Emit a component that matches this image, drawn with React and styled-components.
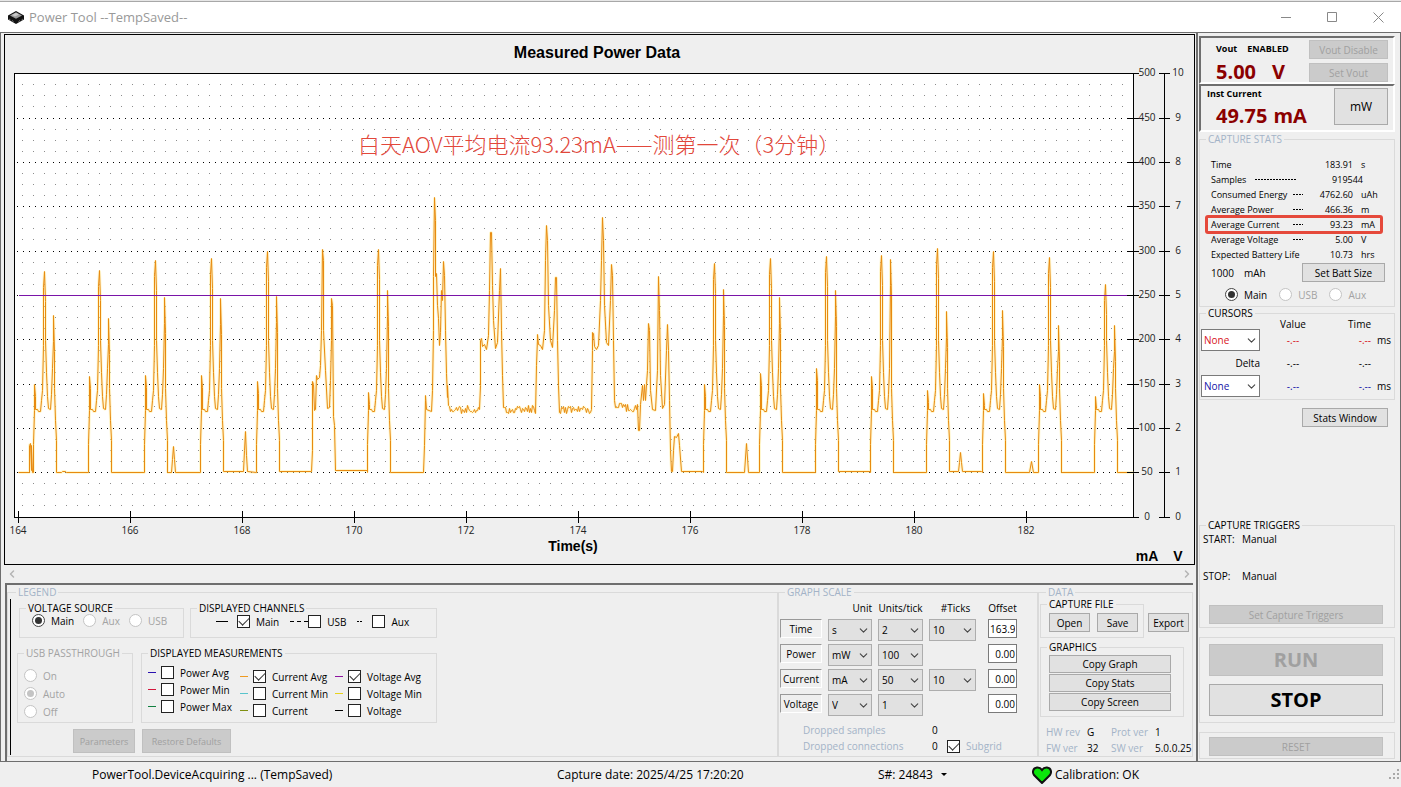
import React, { useState } from "react";
import styled, { createGlobalStyle, css } from "styled-components";
import { ChevronDown, ChevronLeft, ChevronRight } from "lucide-react";

const UI_FONT = `"Open Sans", "Noto Sans", "Noto Sans CJK SC", sans-serif`;
const face = "#efefef";
const edge = "#6e6e6e";
const line = "#dadada";
const steel = "#a3b3c7";
const faded = "#a3a3a3";

const GlobalStyle = createGlobalStyle`
  * { box-sizing: border-box; }
  body { margin: 0; background: ${face}; font-family: ${UI_FONT}; font-size: 10px; line-height: 12px; color: #000; }
  button, input, select { font: inherit; color: inherit; }
`;

/* ---------- window shell ---------- */
const Window = styled.div`
  display: flex;
  flex-direction: column;
  min-height: 100vh;
`;
const TopStrip = styled.div`
  height: 2px;
  background: #e6e6e6;
  border-bottom: 1px solid #a8a8a8;
`;
const TitleBar = styled.header`
  display: flex;
  align-items: center;
  height: 31px;
  padding-left: 7px;
  background: #fff;
  border-bottom: 1px solid ${edge};
`;
const Title = styled.h1`
  flex: 1;
  margin: 0 0 0 4px;
  font-size: 13px;
  font-weight: 400;
  line-height: 16px;
  color: #999;
`;
const WindowButton = styled.button`
  display: grid;
  place-items: center;
  width: 46px;
  height: 28px;
  padding: 0;
  border: 0;
  background: none;
`;
const Body = styled.main`
  display: grid;
  grid-template-columns: minmax(0, 1fr) 205px;
  flex: 1;
`;
const MainColumn = styled.div`
  display: flex;
  flex-direction: column;
  padding: 1px 1px 0 3px;
  border-left: 1px solid ${edge};
`;
const ChartPanel = styled.section`
  border: 1px solid #000;
  line-height: 0;
  svg { width: 100%; height: auto; }
`;
const ScrollRow = styled.div`
  display: flex;
  justify-content: space-between;
  align-items: center;
  height: 18px;
  padding: 0 2px;
`;
const ScrollButton = styled.button`
  display: grid;
  place-items: center;
  width: 12px;
  height: 16px;
  padding: 0;
  border: 0;
  background: none;
  color: #b4b4b4;
`;

/* ---------- shared controls ---------- */
const Group = styled.fieldset`
  min-width: 0;
  margin: 0;
  padding: ${(p) => p.$pad || "0"};
  border: 1px solid ${line};
  color: ${(p) => (p.$off ? faded : "#000")};
`;
const Caption = styled.legend`
  height: 12px;
  margin-left: 6px;
  padding: 0 2px;
  line-height: 12px;
  color: ${(p) => (p.$tone === "steel" ? steel : "inherit")};
`;
const Button = styled.button`
  display: grid;
  place-items: center;
  width: ${(p) => (p.$w ? `${p.$w}px` : "100%")};
  height: ${(p) => p.$h || 19}px;
  padding: 0;
  border: 1px solid #a9a9a9;
  background: #e1e1e1;
  font-size: ${(p) => p.$size || 10}px;
  font-weight: ${(p) => (p.$bold ? 700 : 400)};
  line-height: 1;
  white-space: nowrap;
  &:disabled {
    border-color: #c0c0c0;
    background: #cbcbcb;
    color: #a0a0a0;
  }
`;
const Choice = styled.label`
  display: flex;
  align-items: center;
  gap: 6px;
  height: 13px;
  white-space: nowrap;
  color: ${(p) => (p.$tone === "steel" ? steel : p.$off ? faded : "#000")};
`;
const Radio = styled.input.attrs({ type: "radio" })`
  appearance: none;
  display: grid;
  place-items: center;
  flex: none;
  width: 13px;
  height: 13px;
  margin: 0;
  border: 1px solid #444;
  border-radius: 50%;
  background: #fff;
  &:checked::after {
    content: "";
    width: 7px;
    height: 7px;
    border-radius: 50%;
    background: #333;
  }
  &:disabled { border-color: #c4c4c4; }
  &:disabled:checked::after { background: #c4c4c4; }
`;
const Check = styled.input.attrs({ type: "checkbox" })`
  appearance: none;
  display: grid;
  place-items: center;
  flex: none;
  width: 13px;
  height: 13px;
  margin: 0;
  border: 1px solid #222;
  background: #fff;
  &:checked::after {
    content: "";
    width: 9px;
    height: 5px;
    margin-bottom: 3px;
    border: solid #333;
    border-width: 0 0 1px 1px;
    transform: rotate(-45deg);
  }
`;
const SelectBox = styled.span`
  display: grid;
  grid-template: 22px / 1fr;
  align-items: center;
  max-width: ${(p) => (p.$white ? 59 : 47)}px;
  select, svg { grid-area: 1 / 1; }
  select {
    appearance: none;
    width: 100%;
    height: 22px;
    margin: 0;
    padding: 0 0 0 ${(p) => (p.$white ? 2 : 3)}px;
    border: 1px solid ${(p) => (p.$white ? "#7a7a7a" : "#adadad")};
    border-radius: 0;
    background: ${(p) => (p.$white ? "#fff" : "#e1e1e1")};
    color: ${(p) => p.$ink || "#000"};
  }
  svg { justify-self: end; margin-right: 2px; color: #444; pointer-events: none; }
`;
const dash = (on, off) => (p) =>
  `repeating-linear-gradient(90deg, ${p.$c || "#000"} 0 ${on}px, transparent ${on}px ${on + off}px)`;
const Swatch = styled.i`
  flex: none;
  width: ${(p) => p.$w || 8}px;
  height: 1px;
  background: ${(p) => p.$c || "#000"};
`;
const DashSwatch = styled(Swatch)`
  background: ${dash(4, 3)};
`;
const DotSwatch = styled(Swatch)`
  background: ${dash(2, 1)};
`;

function Select({ label, value, white, ink }) {
  return (
    <SelectBox $white={white} $ink={ink}>
      <select aria-label={label} defaultValue={value}>
        <option>{value}</option>
      </select>
      <ChevronDown size={13} strokeWidth={2} />
    </SelectBox>
  );
}
function RadioItem({ name, label, checked, off }) {
  return (
    <Choice $off={off}>
      <Radio name={name} defaultChecked={checked} disabled={off} />
      {label}
    </Choice>
  );
}
function CheckItem({ label, checked, tone }) {
  return (
    <Choice $tone={tone}>
      <Check defaultChecked={checked} />
      {label}
    </Choice>
  );
}

/* ---------- lower panel ---------- */
const ControlDeck = styled.section`
  display: grid;
  grid-template-columns: minmax(0, 1fr) 260px 155px;
  flex: 1;
  margin: 0 2px 0 1px;
  padding: 1px 0 4px;
  border: solid ${edge};
  border-width: 2px 0 0 2px;
`;
const LegendBody = styled.div`
  display: flex;
  flex-direction: column;
  height: 156px;
  padding-top: 3px;
  border-left: 1px solid #000;
`;
const LegendRow = styled.div`
  display: grid;
  grid-template-columns: ${(p) => p.$cols};
  gap: ${(p) => p.$gap}px;
  height: ${(p) => p.$h}px;
  margin-bottom: ${(p) => p.$after || 0}px;
  padding-left: ${(p) => p.$left}px;
`;
const Inline = styled.div`
  display: flex;
  align-items: center;
  gap: ${(p) => p.$gap || 0}px;
  padding: ${(p) => p.$pad || 0};
`;
const RadioStack = styled.div`
  display: flex;
  flex-direction: column;
  gap: 5px;
  padding: 10px 0 0 6px;
`;
const Measures = styled.div`
  display: grid;
  grid-template-columns: 92px 95px 1fr;
  padding-left: 6px;
`;
const MeasureColumn = styled.div`
  display: flex;
  flex-direction: column;
  gap: 4px;
  padding-top: ${(p) => p.$top}px;
`;

const ScaleGrid = styled.div`
  display: grid;
  grid-template-columns: 42px 44px 45px 53px 29px;
  grid-template-rows: 16px;
  grid-auto-rows: 22px;
  column-gap: 6px;
  row-gap: 3px;
  align-items: start;
  padding: 2px 0 0 1px;
`;
const ScaleHead = styled.span`
  align-self: center;
  text-align: ${(p) => p.$align || "center"};
  white-space: nowrap;
`;
const AxisToggle = styled.button`
  height: 19px;
  padding: 0;
  border: 1px solid #fff;
  border-top-color: #999;
  border-left-color: #999;
  background: ${face};
  line-height: 12px;
`;
const OffsetInput = styled.input`
  width: 29px;
  height: 19px;
  padding: 0 1px;
  border: 1px solid #7a7a7a;
  background: #fff;
  text-align: right;
  grid-column: 5;
`;
const DroppedGrid = styled.dl`
  display: grid;
  grid-template-columns: 129px 15px 1fr;
  grid-auto-rows: 16px;
  align-items: center;
  margin: 0;
  padding: 6px 0 0 24px;
  dt { color: ${steel}; }
  dd { margin: 0; }
`;

const DataTop = styled.div`
  display: flex;
  align-items: flex-start;
  gap: 4px;
  height: 40px;
`;
const ExportSlot = styled.div`
  flex: none;
  padding-top: 15px;
`;
const CopyStack = styled.div`
  display: flex;
  flex-direction: column;
  gap: 1px;
  padding: 2px 12px 5px 8px;
`;
const Versions = styled.dl`
  display: grid;
  grid-template-columns: 41px 24px 44px 1fr;
  grid-auto-rows: 16px;
  align-items: center;
  margin: 0;
  padding: 7px 0 0 6px;
  white-space: nowrap;
  dt { color: ${steel}; }
  dd { margin: 0; }
`;

/* ---------- sidebar ---------- */
const Sidebar = styled.aside`
  display: flex;
  flex-direction: column;
  padding: 3px 5px 2px 1px;
  border: solid ${edge};
  border-width: 0 1px 0 2px;
`;
const Readout = styled.section`
  display: grid;
  grid-template-columns: 1fr ${(p) => p.$side}px;
  height: 48px;
  margin-bottom: ${(p) => p.$after || 0}px;
  padding: ${(p) => p.$pad};
  border: 2px solid;
  border-color: ${edge} #fff #fff ${edge};
`;
const ReadoutHead = styled.div`
  display: flex;
  gap: 10px;
  padding: ${(p) => p.$top || 0}px 0 0 ${(p) => p.$left}px;
  font-weight: 700;
  font-size: 9px;
  line-height: 12px;
`;
const BigValue = styled.div`
  display: flex;
  gap: ${(p) => p.$gap}px;
  padding: ${(p) => p.$top}px 0 0 13px;
  font-size: 20px;
  font-weight: 700;
  line-height: 24px;
  white-space: nowrap;
  color: #8b0000;
`;
const ButtonStack = styled.div`
  display: flex;
  flex-direction: column;
  gap: 4px;
`;
const StatsBody = styled.div`
  padding: 12px 9px 2px 11px;
`;
const StatRow = styled.div`
  position: relative;
  display: grid;
  grid-template-columns: 1fr 40px 24px;
  column-gap: 8px;
  height: 15px;
  font-size: 9px;
  line-height: 15px;
  white-space: nowrap;
  ${(p) =>
    p.$marked &&
    css`
      &::after {
        content: "";
        position: absolute;
        inset: -2px 2px -2px -6px;
        border: 3px solid #e5493b;
        border-radius: 3px;
      }
    `}
`;
const StatName = styled.span`
  display: flex;
  justify-content: space-between;
  align-items: center;
  padding-right: ${(p) => p.$end || 0}px;
`;
const StatValue = styled.span`
  text-align: right;
  grid-column: ${(p) => (p.$count ? "2 / span 2" : "2")};
  padding-right: ${(p) => (p.$count ? 22 : 0)}px;
`;
const CursorGrid = styled.div`
  display: grid;
  grid-template-columns: 59px 60px 45px 1fr;
  grid-template-rows: 9px 22px 24px 22px;
  column-gap: 3px;
  align-items: center;
  padding-left: 1px;
`;
const Cell = styled.span`
  text-align: ${(p) => p.$align || "center"};
  line-height: 9px;
  color: ${(p) => p.$ink || "#000"};
`;
const Spacer = styled.div`
  flex: 1;
`;
const ButtonFrame = styled.div`
  display: flex;
  flex-direction: column;
  gap: 8px;
  margin-top: 9px;
  padding: ${(p) => p.$pad};
  border: 1px solid ${line};
`;
const Triggers = styled.dl`
  display: grid;
  grid-template-columns: 39px 1fr;
  grid-template-rows: 16px 56px;
  margin: 0;
  padding-left: 3px;
  dt, dd { margin: 0; line-height: 16px; }
  .stop { padding-top: 21px; }
`;

/* ---------- status bar ---------- */
const StatusBar = styled.footer`
  display: grid;
  grid-template-columns: 465fr 321fr 154fr 357fr 12px;
  align-items: center;
  height: 26px;
  padding-left: 92px;
  border-top: 1px solid ${edge};
  font-size: 12px;
  line-height: 16px;
`;
const StatusItem = styled.span`
  display: flex;
  align-items: center;
  gap: ${(p) => p.$gap || 0}px;
  min-width: 0;
  white-space: nowrap;
`;
const Serial = styled.button`
  display: flex;
  align-items: center;
  gap: 8px;
  padding: 0;
  border: 0;
  background: none;
`;

/* ---------- chart ---------- */
const TickText = styled.text`
  font-family: ${UI_FONT};
  font-size: 10px;
  text-anchor: middle;
  fill: #222;
`;
const HeadText = styled.text`
  font-family: "Liberation Sans", Arial, sans-serif;
  font-size: ${(p) => p.$size}px;
  font-weight: 700;
  text-anchor: middle;
`;
const NoteText = styled.text`
  font-family: "Noto Sans CJK SC", sans-serif;
  font-size: 22px;
  font-weight: 300;
  fill: #e2473b;
`;

const BASE = 472;
/* each pulse: centre x, lead-in peak, main peak, second peak, floor after it */
const pulse = (x, lead, main, second, floor = BASE) => [
  [x - 11, BASE], [x - 11, 444], [x - 10, 410], [x - 10, lead], [x - 9, lead + 12], [x - 9, 409],
  [x - 7, 409], [x - 6, 411], [x - 4, 411], [x - 3, 400], [x - 2, 390], [x - 1, 345], [x - 1, main + 16],
  [x, main], [x + 1, main + 30], [x + 1, 340], [x + 2, 372], [x + 3, 396], [x + 4, 408], [x + 6, 409],
  [x + 7, 394], [x + 8, 368], [x + 9, second + 26], [x + 9, second], [x + 10, second + 36], [x + 10, 388],
  [x + 11, 420], [x + 12, 440], [x + 12, floor],
];
const blip = (x, y) => [[x - 2, BASE], [x - 1, (y + BASE) / 2], [x, y], [x + 1, (y + BASE) / 2], [x + 2, BASE]];
const ripple = (from, to, y) => {
  const pts = [];
  for (let x = from; x <= to; x += 1) {
    const wobble = Math.sin(x * 12.9898) * 43758.5453;
    pts.push([x, y + Math.round((wobble - Math.floor(wobble)) * 8 - 4)]);
  }
  return pts;
};

const trace = [
  [18, BASE], [29, BASE], [29, 445], [30, 443], [31, 470], [31, 445], [32, BASE],
  ...pulse(44, 384, 271, 315), [61, 472], [62, 471], [65, 471], [66, 472],
  ...pulse(99, 376, 270, 318),
  ...pulse(155, 375, 260, 297), ...blip(173, 446),
  ...pulse(211, 375, 258, 298, 471), [243, 471], [244, 450], [245, 431], [246, 455], [247, 471],
  ...pulse(267, 381, 251, 296, 471), [311, 471],
  [312, 450], [312, 381], [313, 384], [314, 410], [315, 409], [316, 375], [317, 379], [319, 377], [320, 365],
  [321, 330], [322, 249], [323, 260], [323, 330], [325, 370], [327, 408], [329, 407], [330, 380], [331, 340],
  [331, 298], [332, 305], [333, 416], [334, 425], [335, 470], [367, 470],
  ...pulse(378, 392, 249, 290),
  [423, BASE], [424, 445], [425, 400], [425, 395], [426, 409], [431, 411], [432, 390], [433, 330], [433, 276],
  [434, 197], [435, 220], [435, 276], [436, 273], [437, 305], [438, 318], [439, 345], [440, 332], [441, 290],
  [442, 300], [443, 261], [444, 275], [445, 330], [446, 373], [447, 397], [447, 385], [448, 405],
  ...ripple(449, 479, 409),
  [480, 385], [480, 340], [481, 338], [482, 346], [484, 344], [486, 349], [488, 335], [489, 290], [490, 232],
  [491, 232], [492, 285], [493, 320], [495, 348], [497, 342], [499, 290], [500, 268], [501, 330], [502, 375],
  ...ripple(503, 535, 409),
  [536, 365], [537, 338], [537, 334], [538, 344], [540, 345], [542, 349], [544, 330], [545, 260], [546, 225],
  [547, 240], [548, 305], [550, 340], [552, 347], [554, 310], [555, 277], [556, 277], [557, 340], [558, 385],
  ...ripple(559, 591, 409),
  [592, 350], [592, 332], [593, 333], [594, 346], [596, 349], [598, 345], [600, 300], [601, 260], [602, 217],
  [603, 240], [604, 305], [606, 342], [608, 345], [610, 300], [611, 264], [612, 275], [613, 340], [614, 400],
  ...ripple(615, 637, 407),
  [638, 430], [639, 430], [640, 404], [642, 385], [643, 400], [644, 384], [645, 400], [646, 384], [647, 370],
  [648, 323], [649, 330], [650, 390], [652, 409], [655, 410], [657, 370], [658, 276], [659, 310], [660, 375],
  [662, 408], [664, 404], [666, 350], [667, 324], [668, 350], [669, 400], [670, 450], [671, 471], [672, 471],
  [673, 450], [674, 436], [676, 437], [678, 433], [679, 445], [681, 471], [702, 471],
  ...pulse(714, 384, 263, 289), ...blip(746, 443),
  ...pulse(770, 373, 258, 297),
  ...pulse(826, 368, 256, 290, 471), [870, 471],
  ...pulse(881, 376, 255, 259),
  ...pulse(937, 390, 248, 311, 471), [958, 471], [959, 462], [960, 452], [961, 462], [962, 471], [981, 471],
  ...pulse(993, 393, 251, 310), ...blip(1031, 461),
  ...pulse(1049, 384, 257, 325),
  ...pulse(1105, 396, 284, 325), [1133, BASE],
];
const tracePoints = trace.map(([x, y]) => `${x + 0.5},${y + 0.5}`).join(" ");

const rowsY = [73, 118, 162, 206, 251, 295, 339, 384, 428, 472, 517];
const minorRows = rowsY.slice(0, -1).flatMap((y) => [y + 11, y + 22, y + 33]);

function Chart() {
  return (
    <svg viewBox="5 35 1189 529" role="img" aria-label="Measured Power Data">
      <HeadText x="597" y="58" $size={16}>Measured Power Data</HeadText>
      <g shapeRendering="crispEdges">
        <rect x="14.5" y="73.5" width="1119" height="444" fill="#fff" stroke="#000" />
        {minorRows.map((y) => (
          <line key={y} x1="22" x2="1123" y1={y + 0.5} y2={y + 0.5} stroke="#8c8c8c" strokeDasharray="1 10" />
        ))}
        {rowsY.slice(1, -1).map((y) => (
          <line key={y} x1="17" x2="1128" y1={y + 0.5} y2={y + 0.5} stroke="#000" strokeDasharray="1 5" />
        ))}
      </g>
      <polyline points={tracePoints} fill="none" stroke="#fff0a0" strokeWidth="3" strokeLinejoin="bevel" opacity="0.5" />
      <polyline points={tracePoints} fill="none" stroke="#e88a10" strokeLinejoin="bevel" />
      <g shapeRendering="crispEdges" stroke="#000">
        <rect x="19" y="295" width="1114" height="1" fill="#7a14a8" stroke="none" />
        <line x1="1164.5" x2="1164.5" y1="73" y2="518" />
        {rowsY.map((y, i) => (
          <React.Fragment key={y}>
            <line x1={i === 0 || i === 10 ? 1133 : 1127} x2="1139" y1={y + 0.5} y2={y + 0.5} />
            <line x1="1159" x2="1170" y1={y + 0.5} y2={y + 0.5} />
          </React.Fragment>
        ))}
        {[...Array(10)].map((_, i) => (
          <line key={i} x1={18.5 + i * 112} x2={18.5 + i * 112} y1="511" y2="523" />
        ))}
      </g>
      {rowsY.map((y, i) => (
        <React.Fragment key={y}>
          <TickText x="1147" y={y + 3}>{500 - i * 50}</TickText>
          <TickText x="1178" y={y + 3}>{10 - i}</TickText>
        </React.Fragment>
      ))}
      {[...Array(10)].map((_, i) => (
        <TickText key={i} x={18 + i * 112} y="534">{164 + i * 2}</TickText>
      ))}
      <HeadText x="573" y="551" $size={14}>Time(s)</HeadText>
      <HeadText x="1147" y="561" $size={14}>mA</HeadText>
      <HeadText x="1178" y="561" $size={14}>V</HeadText>
      <NoteText x="358" y="153">白天AOV平均电流93.23mA——测第一次（3分钟）</NoteText>
    </svg>
  );
}

/* ---------- data ---------- */
const measures = [
  { top: 7, items: [["Power Avg", "#2a12b0"], ["Power Min", "#d3163c"], ["Power Max", "#128040"]] },
  { top: 11, items: [["Current Avg", "#ef9a20", true], ["Current Min", "#58c4cc"], ["Current", "#7f8f10"]] },
  { top: 11, items: [["Voltage Avg", "#8e14a0", true], ["Voltage Min", "#e8d21c"], ["Voltage", "#000"]] },
];
const scales = [
  ["Time", "s", "2", "10", "163.9."],
  ["Power", "mW", "100", null, "0.00"],
  ["Current", "mA", "50", "10", "0.00"],
  ["Voltage", "V", "1", null, "0.00"],
];
const stats = [
  ["Time", 0, "183.91", "s"],
  ["Samples", 42, "919544", null],
  ["Consumed Energy", 10, "4762.60", "uAh"],
  ["Average Power", 10, "466.36", "m"],
  ["Average Current", 10, "93.23", "mA", true],
  ["Average Voltage", 10, "5.00", "V"],
  ["Expected Battery Life", 0, "10.73", "hrs"],
];

export default function App() {
  const [running] = useState(true);
  return (
    <Window>
      <GlobalStyle />
      <TopStrip />
      <TitleBar>
        <svg width="18" height="14" viewBox="0 0 18 14">
          <path d="M1 5.5 9 1l8 4.5v4L9 14 1 9.500z" fill="#111" />
          <path d="M3 5.500 9 2.200l6 3.300L9 8.800z" fill="#9a9a9a" />
          <path d="M5 5 9 2.800 12 4.400 8 6.500z" fill="#c9c9c9" />
          <path d="M2 9l1.500 1M5 10.500l1.500 1M11.500 11.500l1.500-1M14.500 10l1.500-1" stroke="#777" />
        </svg>
        <Title>Power Tool --TempSaved--</Title>
        <WindowButton aria-label="Minimize">
          <svg width="11" height="11"><path d="M0 5.500h10" stroke="#888" /></svg>
        </WindowButton>
        <WindowButton aria-label="Maximize">
          <svg width="11" height="11"><path d="M.5.5h9v9h-9z" fill="none" stroke="#888" /></svg>
        </WindowButton>
        <WindowButton aria-label="Close">
          <svg width="11" height="11"><path d="M.5.5l10 10M10.500.5l-10 10" stroke="#888" /></svg>
        </WindowButton>
      </TitleBar>

      <Body>
        <MainColumn>
          <ChartPanel><Chart /></ChartPanel>
          <ScrollRow>
            <ScrollButton aria-label="Scroll left"><ChevronLeft size={12} strokeWidth={3} /></ScrollButton>
            <ScrollButton aria-label="Scroll right"><ChevronRight size={12} strokeWidth={3} /></ScrollButton>
          </ScrollRow>

          <ControlDeck>
            <Group $pad="1px 0 1px 2px">
              <Caption $tone="steel">LEGEND</Caption>
              <LegendBody>
                <LegendRow $cols="165px 247px" $gap={6} $h={36} $after={9} $left={8}>
                  <Group>
                    <Caption>VOLTAGE SOURCE</Caption>
                    <Inline $gap={9} $pad="0 0 0 12px">
                      <RadioItem name="source" label="Main" checked />
                      <RadioItem name="source" label="Aux" off />
                      <RadioItem name="source" label="USB" off />
                    </Inline>
                  </Group>
                  <Group>
                    <Caption>DISPLAYED CHANNELS</Caption>
                    <Inline $gap={11} $pad="1px 0 0 25px">
                      <Inline $gap={9}>
                        <Swatch $w={12} />
                        <CheckItem label="Main" checked />
                      </Inline>
                      <Inline>
                        <DashSwatch $w={18} />
                        <CheckItem label="USB" />
                      </Inline>
                      <Inline $gap={9}>
                        <DotSwatch $w={6} />
                        <CheckItem label="Aux" />
                      </Inline>
                    </Inline>
                  </Group>
                </LegendRow>
                <LegendRow $cols="116px 296px" $gap={8} $h={76} $after={6} $left={6}>
                  <Group $off>
                    <Caption>USB PASSTHROUGH</Caption>
                    <RadioStack>
                      <RadioItem name="pass" label="On" off />
                      <RadioItem name="pass" label="Auto" checked off />
                      <RadioItem name="pass" label="Off" off />
                    </RadioStack>
                  </Group>
                  <Group>
                    <Caption>DISPLAYED MEASUREMENTS</Caption>
                    <Measures>
                      {measures.map((col, i) => (
                        <MeasureColumn key={i} $top={col.top}>
                          {col.items.map(([label, color, on]) => (
                            <Inline key={label} $gap={5}>
                              <Swatch $c={color} />
                              <CheckItem label={label} checked={on} />
                            </Inline>
                          ))}
                        </MeasureColumn>
                      ))}
                    </Measures>
                  </Group>
                </LegendRow>
                <Inline $gap={7} $pad="0 0 0 62px">
                  <Button $w={62} $h={24} $size={9} disabled>Parameters</Button>
                  <Button $w={89} $h={24} $size={9} disabled>Restore Defaults</Button>
                </Inline>
              </LegendBody>
            </Group>

            <Group>
              <Caption $tone="steel">GRAPH SCALE</Caption>
              <ScaleGrid>
                <span />
                <ScaleHead $align="right">Unit</ScaleHead>
                <ScaleHead>Units/tick</ScaleHead>
                <ScaleHead>#Ticks</ScaleHead>
                <ScaleHead>Offset</ScaleHead>
                {scales.map(([name, unit, per, ticks, offset]) => (
                  <React.Fragment key={name}>
                    <AxisToggle>{name}</AxisToggle>
                    <Select label={`${name} unit`} value={unit} />
                    <Select label={`${name} units per tick`} value={per} />
                    {ticks && <Select label={`${name} ticks`} value={ticks} />}
                    <OffsetInput aria-label={`${name} offset`} defaultValue={offset} />
                  </React.Fragment>
                ))}
              </ScaleGrid>
              <DroppedGrid>
                <dt>Dropped samples</dt>
                <dd>0</dd>
                <span />
                <dt>Dropped connections</dt>
                <dd>0</dd>
                <CheckItem label="Subgrid" checked tone="steel" />
              </DroppedGrid>
            </Group>

            <Group $pad="0 0 0 1px">
              <Caption $tone="steel">DATA</Caption>
              <DataTop>
                <Group>
                  <Caption>CAPTURE FILE</Caption>
                  <Inline $gap={7} $pad="3px 5px 5px 8px">
                    <Button $w={41}>Open</Button>
                    <Button $w={41}>Save</Button>
                  </Inline>
                </Group>
                <ExportSlot><Button $w={41}>Export</Button></ExportSlot>
              </DataTop>
              <Inline $pad="3px 8px 0 0">
                <Group>
                  <Caption>GRAPHICS</Caption>
                  <CopyStack>
                    <Button $w={122} $h={18}>Copy Graph</Button>
                    <Button $w={122} $h={18}>Copy Stats</Button>
                    <Button $w={122} $h={18}>Copy Screen</Button>
                  </CopyStack>
                </Group>
              </Inline>
              <Versions>
                <dt>HW rev</dt><dd>G</dd>
                <dt>Prot ver</dt><dd>1</dd>
                <dt>FW ver</dt><dd>32</dd>
                <dt>SW ver</dt><dd>5.0.0.25</dd>
              </Versions>
            </Group>
          </ControlDeck>
        </MainColumn>

        <Sidebar>
          <Readout $side={79} $pad="2px 5px 0 2px">
            <div>
              <ReadoutHead $left={13} $top={3}><span>Vout</span><span>ENABLED</span></ReadoutHead>
              <BigValue $gap={16} $top={5}><span>5.00</span><span>V</span></BigValue>
            </div>
            <ButtonStack>
              <Button $h={19} disabled>Vout Disable</Button>
              <Button $h={19} disabled>Set Vout</Button>
            </ButtonStack>
          </Readout>
          <Readout $side={54} $pad="2px 5px 0 2px" $after={1}>
            <div>
              <ReadoutHead $left={4}>Inst Current</ReadoutHead>
              <BigValue $gap={6} $top={4}><span>49.75</span><span>mA</span></BigValue>
            </div>
            <Button $h={37} $size={12}>mW</Button>
          </Readout>

          <Group>
            <Caption $tone="steel">CAPTURE STATS</Caption>
            <StatsBody>
              {stats.map(([name, leader, value, unit, marked]) => (
                <StatRow key={name} $marked={marked}>
                  <StatName $end={leader > 10 ? 8 : 2}>
                    {name}
                    {leader > 0 && <DotSwatch $w={leader} />}
                  </StatName>
                  <StatValue $count={!unit}>{value}</StatValue>
                  {unit && <span>{unit}</span>}
                </StatRow>
              ))}
              <Inline $gap={10} $pad="1px 0 0">
                <span>1000</span>
                <span>mAh</span>
                <Spacer />
                <Button $w={83}>Set Batt Size</Button>
              </Inline>
              <Inline $gap={12} $pad="6px 0 3px 14px">
                <RadioItem name="stat" label="Main" checked />
                <RadioItem name="stat" label="USB" off />
                <RadioItem name="stat" label="Aux" off />
              </Inline>
            </StatsBody>
          </Group>

          <Group $pad="1px 0 2px">
            <Caption>CURSORS</Caption>
            <CursorGrid>
              <span />
              <Cell>Value</Cell>
              <Cell $align="right">Time</Cell>
              <span />
              <Select label="Cursor 1" value="None" white ink="#d8141c" />
              <Cell $ink="#d8141c">-.--</Cell>
              <Cell $ink="#d8141c" $align="right">-.--</Cell>
              <Cell>ms</Cell>
              <Cell $align="right">Delta</Cell>
              <Cell>-.--</Cell>
              <Cell $align="right">-.--</Cell>
              <span />
              <Select label="Cursor 2" value="None" white ink="#1414a8" />
              <Cell $ink="#1414a8">-.--</Cell>
              <Cell $ink="#1414a8" $align="right">-.--</Cell>
              <Cell>ms</Cell>
            </CursorGrid>
          </Group>
          <Inline $pad="8px 7px 0 0">
            <Spacer />
            <Button $w={86}>Stats Window</Button>
          </Inline>
          <Spacer />

          <Group $pad="0 0 3px">
            <Caption>CAPTURE TRIGGERS</Caption>
            <Triggers>
              <dt>START:</dt>
              <dd>Manual</dd>
              <dt className="stop">STOP:</dt>
              <dd className="stop">Manual</dd>
            </Triggers>
            <Inline $pad="2px 11px 0 9px"><Button disabled>Set Capture Triggers</Button></Inline>
          </Group>
          <ButtonFrame $pad="6px 11px 6px 9px">
            <Button $h={32} $size={20} $bold disabled={running}>RUN</Button>
            <Button $h={32} $size={20} $bold>STOP</Button>
          </ButtonFrame>
          <ButtonFrame $pad="4px 11px 2px 9px">
            <Button disabled>RESET</Button>
          </ButtonFrame>
        </Sidebar>
      </Body>

      <StatusBar>
        <StatusItem>PowerTool.DeviceAcquiring ... (TempSaved)</StatusItem>
        <StatusItem>Capture date: 2025/4/25 17:20:20</StatusItem>
        <StatusItem>
          <Serial>
            S#: 24843
            <svg width="6" height="4"><path d="M0 0h6L3 3z" /></svg>
          </Serial>
        </StatusItem>
        <StatusItem $gap={3}>
          <svg width="20" height="18" viewBox="0 0 20 18">
            <path d="M10 17 2 9C0 6 1 2 5 1.500c2.500-.2 4 1 5 2.500 1-1.500 2.500-2.700 5-2.500 4 .5 5 4.500 3 7.500z" fill="#0be60b" stroke="#111" strokeWidth="2" />
          </svg>
          Calibration: OK
        </StatusItem>
        <svg width="12" height="12" fill="#a8a8a8">
          <path d="M8 0h2v2H8zM8 4h2v2H8zM4 4h2v2H4zM8 8h2v2H8zM4 8h2v2H4zM0 8h2v2H0z" />
        </svg>
      </StatusBar>
    </Window>
  );
}
